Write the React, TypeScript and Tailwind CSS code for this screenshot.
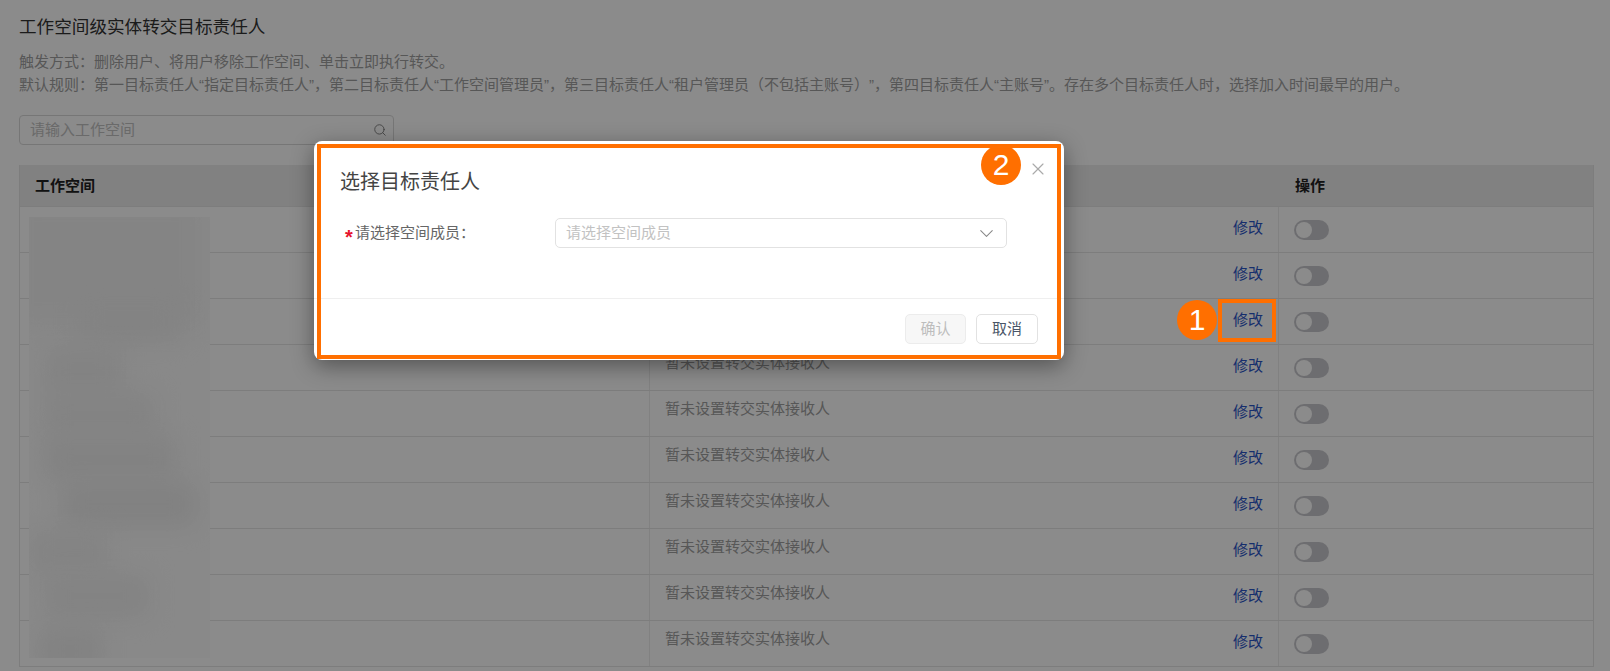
import React from "react";
import { ChevronDown, Search, X } from "lucide-react";

const font = { fontFamily: '"Liberation Sans", "Noto Sans CJK SC", sans-serif' };

function Row() {
  return (
    <div className="grid h-[46px] grid-cols-[630px_629px_1fr] border-t border-[#e6e6e6] first:border-t-0">
      <div className="border-r border-[#ececec]" />
      <div className="flex items-center justify-between border-r border-[#ececec] pl-[15px] pr-[15px]">
        <span className="mb-[8px] text-[15px] text-[#a0a0a0]">暂未设置转交实体接收人</span>
        <span className="mb-[2px] text-[15px] text-[#2a55c8]">修改</span>
      </div>
      <div className="flex items-center pl-[15px]">
        <span className="flex h-[20px] w-[35px] items-center rounded-full bg-[#c9c9ce] pl-[2px]">
          <span className="h-[16px] w-[16px] rounded-full bg-white" />
        </span>
      </div>
    </div>
  );
}

export default function App() {
  const rows = Array.from({ length: 10 }, (_, i) => i);
  return (
    <div className="relative h-[671px] w-[1610px] overflow-hidden bg-white" style={font}>
      <div className="pl-[19px] pr-[16px] pt-[14px]">
        <h1 className="text-[17.6px] leading-[26px] font-normal text-[#333]">工作空间级实体转交目标责任人</h1>
        <div className="mt-[10px] text-[15px] leading-[23px] text-[#a0a0a0] [text-spacing-trim:space-all]">
          <p>触发方式：删除用户、将用户移除工作空间、单击立即执行转交。</p>
          <p className="whitespace-nowrap">默认规则：第一目标责任人“指定目标责任人”，第二目标责任人“工作空间管理员”，第三目标责任人“租户管理员（不包括主账号）”，第四目标责任人“主账号”。存在多个目标责任人时，选择加入时间最早的用户。</p>
        </div>
        <div className="mt-[19px] flex h-[30px] w-[375px] items-center justify-between rounded-[4px] border border-[#d9d9d9] pl-[10px] pr-[6px]">
          <span className="pt-[1px] text-[15px] text-[#c2c2c2]">请输入工作空间</span>
          <Search size={14} strokeWidth={1.5} className="text-[#777]" />
        </div>
        <div className="relative mt-[20px] w-[1575px] border-x border-b border-[#e6e6e6]">
          <div className="grid h-[41px] grid-cols-[630px_629px_1fr] items-center bg-[#ececec] pt-[1px] text-[15px] font-semibold text-[#222]">
            <span className="pl-[15px]">工作空间</span>
            <span />
            <span className="pl-[16px]">操作</span>
          </div>
          {rows.map((i) => (
            <Row key={i} />
          ))}
          <div className="absolute left-[9px] top-[52px] h-[441px] w-[181px] overflow-hidden bg-[#fbfbfb]">
            <div className="absolute left-[-20px] top-[-20px] h-[130px] w-[195px] bg-[#f3f3f3] blur-[14px]" />
            <div className="absolute left-[50px] top-[84px] h-[40px] w-[100px] bg-[#f0f0f0] blur-[12px]" />
            <div className="absolute left-[16px] top-[130px] h-[46px] w-[76px] bg-[#f0f0f0] blur-[12px]" />
            <div className="absolute left-[16px] top-[176px] h-[42px] w-[110px] bg-[#f0f0f0] blur-[12px]" />
            <div className="absolute left-[16px] top-[220px] h-[42px] w-[130px] bg-[#eeeeee] blur-[12px]" />
            <div className="absolute left-[34px] top-[266px] h-[42px] w-[132px] bg-[#ececec] blur-[12px]" />
            <div className="absolute left-[0px] top-[314px] h-[40px] w-[78px] bg-[#f1f1f1] blur-[12px]" />
            <div className="absolute left-[16px] top-[358px] h-[42px] w-[104px] bg-[#f0f0f0] blur-[12px]" />
            <div className="absolute left-[10px] top-[412px] h-[44px] w-[62px] bg-[#eeeeee] blur-[12px]" />
          </div>
        </div>
      </div>

      {/* mask */}
      <div className="absolute inset-0 bg-black/[0.455]" />

      {/* highlight on the row action */}
      <div className="absolute left-[1218px] top-[299px] h-[43px] w-[58px] border-[4px] border-[#ff6f00]" />
      <div className="absolute left-[1177px] top-[300px] flex h-[40px] w-[40px] items-center justify-center rounded-full bg-[#ff6f00] text-[30px] leading-none text-white">
        1
      </div>

      {/* dialog */}
      <div className="absolute left-[314px] top-[141px] flex h-[219px] w-[750px] flex-col rounded-[8px] bg-white shadow-[0_6px_22px_rgba(0,0,0,0.4)]">
        <div className="flex items-start justify-between pl-[26px] pr-[16px] pt-[26px]">
          <h2 className="text-[20px] leading-[30px] font-normal text-[#444]">选择目标责任人</h2>
          <X size={20} strokeWidth={1.4} className="mt-[-8px] text-[#aaa]" />
        </div>
        <div className="mt-[21px] flex items-center pl-[31px]">
          <span className="mt-[8px] h-[20px] w-[10px] text-[20px] leading-[20px] font-bold text-[#e6142d]">*</span>
          <span className="w-[200px] text-[15px] text-[#666]">请选择空间成员：</span>
          <div className="flex h-[30px] w-[452px] items-center justify-between rounded-[5px] border border-[#e2e2e2] pl-[10px] pr-[8px]">
            <span className="pt-[1px] text-[15px] text-[#c2c2c2]">请选择空间成员</span>
            <ChevronDown size={23} strokeWidth={1.1} className="text-[#888]" />
          </div>
        </div>
        <div className="mt-auto flex h-[62px] items-start justify-end gap-[10px] border-t border-[#efefef] pr-[26px] pt-[15px]">
          <button className="h-[30px] w-[61px] rounded-[5px] border border-[#ececec] bg-[#f7f7f7] text-[15px] text-[#bdbdbd]">确认</button>
          <button className="h-[30px] w-[62px] rounded-[5px] border border-[#e2e2e2] bg-white text-[15px] text-[#4a5568]">取消</button>
        </div>
      </div>

      <div className="absolute left-[317px] top-[144px] h-[215px] w-[744px] border-[4px] border-[#ff6f00]" />
      <div className="absolute left-[981px] top-[145px] flex h-[40px] w-[40px] items-center justify-center rounded-full bg-[#ff6f00] text-[30px] leading-none text-white">
        2
      </div>
    </div>
  );
}
